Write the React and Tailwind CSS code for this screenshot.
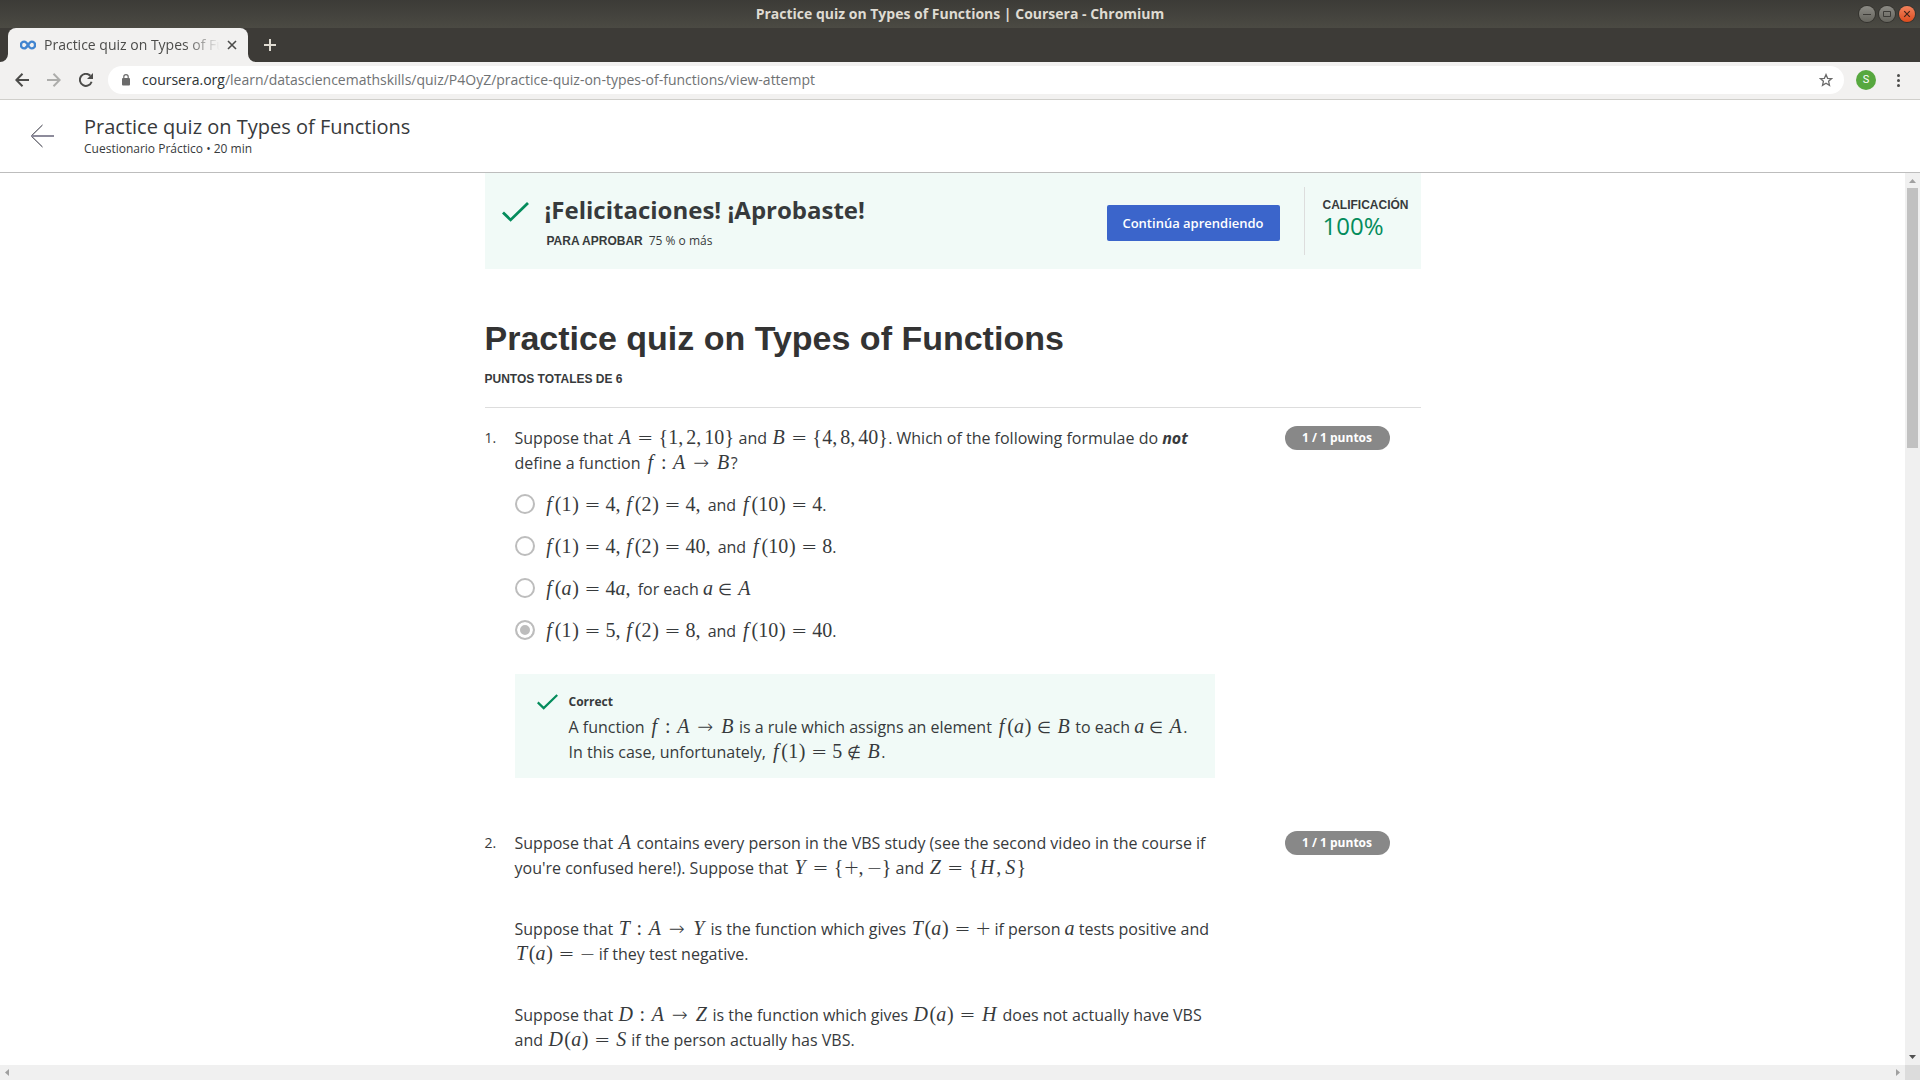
import React from "react";

const UI = "font-['Open_Sans','Noto_Sans',sans-serif]";
const ARIAL = "font-['Liberation_Sans',Arial,sans-serif]";

/* Advance width of each math glyph, relations include their side spacing. */
const GLYPH = {
  A: "w-[15px] italic",
  B: "w-[15px] italic",
  f: "w-[11px] italic",
  a: "w-[10px] italic",
  T: "w-[14px] italic",
  Y: "w-[15px] italic",
  Z: "w-[14px] italic",
  D: "w-[17px] italic",
  H: "w-[18px] italic",
  S: "w-[12px] italic",
  "=": "w-[26px] font-['DejaVu_Sans',sans-serif] text-[19px] font-extralight",
  "→": "w-[29px] font-['DejaVu_Sans',sans-serif] text-[19px] font-extralight",
  "∈": "w-[24px] font-['DejaVu_Sans',sans-serif] text-[16px] font-extralight",
  "∉": "w-[24px] font-['DejaVu_Sans',sans-serif] text-[16px] font-extralight",
  ":": "w-[16px]",
  "+": "w-[15px] font-['DejaVu_Sans',sans-serif] text-[19px] font-extralight",
  "−": "w-[15px] font-['DejaVu_Sans',sans-serif] text-[19px] font-extralight",
  ",": "w-[8px] pr-[3px]",
  "(": "w-[7px]",
  ")": "w-[8px]",
};

function M({ children }) {
  return (
    <span className="whitespace-nowrap font-['Liberation_Serif','DejaVu_Serif',serif] text-[20px] leading-none">
      {[...children].map((c, i) => (
        <span key={i} className={"inline-block text-center " + (GLYPH[c] || "w-[10px]")}>
          {c}
        </span>
      ))}
    </span>
  );
}

function TitleBar() {
  const round = "flex size-4 items-center justify-center rounded-full ring-1 ring-[#34332e]";
  return (
    <header className="grid h-7 shrink-0 grid-cols-[1fr_auto_1fr] items-center bg-linear-to-b from-[#3c3b37] to-[#4b4a43] px-[5px]">
      <span />
      <h1 className="text-[14px] leading-5 font-bold text-[#dfdbd2]">
        Practice quiz on Types of Functions | Coursera - Chromium
      </h1>
      <div className="flex justify-end gap-1">
        <button aria-label="Minimizar" className={round + " bg-linear-to-b from-[#8c8b85] to-[#65645d]"}>
          <svg width="10" height="10" viewBox="0 0 10 10" stroke="#3c3b37"><path d="M1 5.5h8" /></svg>
        </button>
        <button aria-label="Maximizar" className={round + " bg-linear-to-b from-[#8c8b85] to-[#65645d]"}>
          <svg width="10" height="10" viewBox="0 0 10 10" stroke="#3c3b37" fill="none"><path d="M1.5 2.5h7v5h-7z" /></svg>
        </button>
        <button aria-label="Cerrar" className={round + " bg-linear-to-b from-[#f2825b] to-[#dc4a1a]"}>
          <svg width="10" height="10" viewBox="0 0 10 10" stroke="#40241a" strokeWidth="1.2"><path d="M2.2 2.2l5.6 5.6M7.8 2.2l-5.6 5.6" /></svg>
        </button>
      </div>
    </header>
  );
}

function TabStrip() {
  return (
    <div className="flex h-[34px] shrink-0 items-stretch bg-[#3d3b37]">
      <div className="flex w-2 items-end bg-[#3d3b37]">
        <svg width="8" height="8" viewBox="0 0 8 8" fill="#f2f1f0"><path d="M8 0v8H0a8 8 0 0 0 8-8z" /></svg>
      </div>
      <div className="flex w-60 items-center rounded-t-lg bg-[#f2f1f0] pl-3">
        <svg width="16" height="10" viewBox="0 0 16 10" fill="none" stroke="#4285d0" strokeWidth="2.4">
          <path d="M8 5C6.800 2.800 5.800 1.600 4.300 1.600a3.400 3.400 0 0 0 0 6.800C7.500 8.400 8.500 1.600 11.700 1.600a3.400 3.400 0 0 1 0 6.800C10.200 8.400 9.200 7.200 8 5z" />
        </svg>
        <span className="ml-2 w-[176px] overflow-hidden whitespace-nowrap text-[14px] leading-5 text-[#4c4c4a] mask-r-from-80% mask-r-to-100%">
          Practice quiz on Types of Functions
        </span>
        <button aria-label="Cerrar pestaña" className="ml-[7px]">
          <svg width="10" height="10" viewBox="0 0 10 10" stroke="#4c4c4a" strokeWidth="1.6"><path d="M1 1l8 8M9 1L1 9" /></svg>
        </button>
      </div>
      <div className="flex w-2 items-end">
        <svg width="8" height="8" viewBox="0 0 8 8" fill="#f2f1f0"><path d="M0 0v8h8a8 8 0 0 1-8-8z" /></svg>
      </div>
      <button aria-label="Nueva pestaña" className="ml-2">
        <svg width="12" height="12" viewBox="0 0 12 12" stroke="#dfdbd2" strokeWidth="2"><path d="M6 0v12M0 6h12" /></svg>
      </button>
    </div>
  );
}

function Toolbar() {
  return (
    <div className="flex h-[38px] shrink-0 items-center border-b border-[#d0cfcb] bg-[#f2f1f0] pr-5 pb-px pl-[15px]">
      <button aria-label="Atrás">
        <svg width="14" height="14" viewBox="0 0 14 14" fill="none" stroke="#4c4c4a" strokeWidth="2"><path d="M14 7H1.500M7.500 .7L1.300 7l6.200 6.300" /></svg>
      </button>
      <button aria-label="Adelante" className="ml-[18px]">
        <svg width="14" height="14" viewBox="0 0 14 14" fill="none" stroke="#adadab" strokeWidth="2"><path d="M0 7h12.500M6.500 .7L12.700 7l-6.200 6.300" /></svg>
      </button>
      <button aria-label="Recargar" className="ml-[18px]">
        <svg width="14" height="14" viewBox="0 0 14 14"><path d="M12.600 8.700A6 6 0 1 1 11.300 2.800" fill="none" stroke="#4c4c4a" strokeWidth="2" /><path d="M14 0v6H8z" fill="#4c4c4a" /></svg>
      </button>
      <div className="ml-[15px] flex h-7 flex-1 items-center rounded-full bg-white pr-[11px] pl-[14px] text-[14px] leading-5">
        <svg width="8" height="12" viewBox="0 0 8 12"><rect y="4" width="8" height="7.500" rx="1" fill="#6b6b6b" /><path d="M1.800 4.500V2.800a2.200 2.200 0 0 1 4.400 0v1.700" fill="none" stroke="#6b6b6b" strokeWidth="1.200" /></svg>
        <label htmlFor="url" className="ml-3 text-[#2e3436]">coursera.org</label>
        <input
          id="url"
          className="min-w-0 flex-1 bg-transparent text-[#6f7274] outline-none"
          defaultValue="/learn/datasciencemathskills/quiz/P4OyZ/practice-quiz-on-types-of-functions/view-attempt"
        />
        <button aria-label="Marcar página">
          <svg width="14" height="14" viewBox="0 0 14 14" fill="none" stroke="#6b6b6b" strokeWidth="1.300"><path d="M7 1.600l1.600 3.700 4 .3-3 2.700.9 4L7 10.200l-3.500 2.100.9-4-3-2.700 4-.3z" /></svg>
        </button>
      </div>
      <button aria-label="Perfil" className="ml-3 flex size-5 items-center justify-center rounded-full bg-[#57a83f] font-['Roboto',sans-serif] text-[11px] text-white">S</button>
      <button aria-label="Menú" className="ml-[21px]">
        <svg width="3" height="13" viewBox="0 0 3 13" fill="#4c4c4a"><circle cx="1.500" cy="1.500" r="1.500" /><circle cx="1.500" cy="6.500" r="1.500" /><circle cx="1.500" cy="11.500" r="1.500" /></svg>
      </button>
    </div>
  );
}

function CourseHeader() {
  return (
    <div className="flex h-[73px] shrink-0 items-center border-b border-[#bdbdbd] bg-white pl-[30px] text-[#373a3c]">
      <a href="#curso" aria-label="Volver">
        <svg width="24" height="24" viewBox="0 0 24 24" fill="none" stroke="#4b4a58" strokeWidth="1"><path d="M12.500 1L1.300 12l11.200 11" stroke="#2b2b38" /><path d="M1 12h23" stroke="#8d8b9b" strokeWidth="2" /></svg>
      </a>
      <div className="ml-[30px] pt-0.5">
        <div className="text-[20px] leading-6">Practice quiz on Types of Functions</div>
        <div className="text-[12px] leading-5">Cuestionario Práctico • 20 min</div>
      </div>
    </div>
  );
}

function Check({ className }) {
  return (
    <svg className={className} viewBox="0 0 27 20" fill="none" stroke="#048c5c" strokeWidth="2.800"><path d="M1 10.500l7.600 7.400L26 1" /></svg>
  );
}

function Banner() {
  return (
    <section className="flex h-24 items-start bg-[#f1faf7] pr-3">
      <Check className="mt-[29px] ml-[17px] h-5 w-[27px] shrink-0" />
      <div className="ml-4 flex-1 pt-[21px]">
        <h2 className="text-[24px] leading-8 font-bold">¡Felicitaciones! ¡Aprobaste!</h2>
        <p className="mt-1 ml-0.5 text-[12px] leading-[22px]">
          <b className={"mr-1.5 " + ARIAL}>PARA APROBAR</b>75 % o más
        </p>
      </div>
      <button className="mt-8 h-9 w-[173px] rounded-xs bg-[#3b65cb] pt-px text-[13px] font-semibold text-white">Continúa aprendiendo</button>
      <div className="mt-[14px] ml-6 h-[68px] border-l border-[#ddd] pt-2 pl-[18px]">
        <div className={"text-[12px] leading-5 font-bold " + ARIAL}>CALIFICACIÓN</div>
        <div className="text-[24px] leading-[22px] text-[#048c5c]">100%</div>
      </div>
    </section>
  );
}

function Option({ children, checked }) {
  return (
    <label className="flex h-[42px] items-center gap-[9px]">
      <input
        type="radio"
        name="q1"
        defaultChecked={checked}
        className="size-5 shrink-0 appearance-none rounded-full border-2 border-[#bdbdbd] bg-white checked:bg-[#bdbdbd] checked:shadow-[inset_0_0_0_3px_white]"
      />
      <span className="pt-0.5 leading-[25px]">{children}</span>
    </label>
  );
}

function Question({ number, children }) {
  return (
    <section className="flex items-start">
      <div className="w-[30px] shrink-0 text-[14px] leading-6">{number}.</div>
      <div className="min-w-0 max-w-[700px] flex-1 text-[16px] leading-[25px]">{children}</div>
      <div className="ml-[70px] w-[105px] shrink-0 rounded-full bg-[#888] text-center text-[12px] leading-6 font-bold text-white">1 / 1 puntos</div>
    </section>
  );
}

function Page() {
  return (
    <main className="min-w-0 flex-1 overflow-hidden">
      <div className="mx-auto max-w-[936px] text-[#373a3c]">
        <Banner />
        <h1 className={"mt-[45px] text-[34px] leading-[48px] font-bold text-[#333] " + ARIAL}>Practice quiz on Types of Functions</h1>
        <p className={"mt-[7px] mb-[18px] text-[12px] leading-5 font-bold " + ARIAL}>PUNTOS TOTALES DE 6</p>
        <hr className="mb-[18px] border-[#ddd]" />
        <Question number={1}>
          <p>
            Suppose that <M>{"A={1,2,10}"}</M> and <M>{"B={4,8,40}"}</M>. Which of the following formulae do <b><i>not</i></b> define a function <M>f:A→B</M>?
          </p>
          <div className="mt-[7px]">
            <Option><M>f(1)=4,f(2)=4,</M> and <M>f(10)=4</M>.</Option>
            <Option><M>f(1)=4,f(2)=40,</M> and <M>f(10)=8</M>.</Option>
            <Option><M>f(a)=4a,</M> for each <M>a∈A</M></Option>
            <Option checked><M>f(1)=5,f(2)=8,</M> and <M>f(10)=40</M>.</Option>
          </div>
          <div className="mt-[23px] mb-[53px] flex bg-[#f1faf7] pt-[15px] pr-5 pb-[13px] pl-[22px]">
            <Check className="mt-[5px] h-4 w-[21px] shrink-0" />
            <div className="ml-[11px]">
              <div className="text-[12px] leading-[26px] font-bold">Correct</div>
              <p>
                A function <M>f:A→B</M> is a rule which assigns an element <M>f(a)∈B</M> to each <M>a∈A</M>. In this case, unfortunately, <M>f(1)=5∉B</M>.
              </p>
            </div>
          </div>
        </Question>
        <Question number={2}>
          <p>
            Suppose that <M>A</M> contains every person in the VBS study (see the second video in the course if you're confused here!). Suppose that <M>{"Y={+,−}"}</M> and <M>{"Z={H,S}"}</M>
          </p>
          <p className="mt-9">
            Suppose that <M>T:A→Y</M> is the function which gives <M>T(a)=+</M> if person <M>a</M> tests positive and <M>T(a)=−</M> if they test negative.
          </p>
          <p className="mt-9">
            Suppose that <M>D:A→Z</M> is the function which gives <M>D(a)=H</M> does not actually have VBS and <M>D(a)=S</M> if the person actually has VBS.
          </p>
        </Question>
      </div>
    </main>
  );
}

export default function App() {
  return (
    <div className={"flex h-screen flex-col overflow-hidden bg-white " + UI}>
      <TitleBar />
      <TabStrip />
      <Toolbar />
      <CourseHeader />
      <div className="flex min-h-0 flex-1">
        <Page />
        <div className="flex w-[15px] shrink-0 flex-col items-center justify-between bg-[#f0f0f0]">
          <div className="flex h-full flex-col items-center">
            <svg className="mt-1.5" width="7" height="4" viewBox="0 0 7 4" fill="#a0a0a0"><path d="M0 4l3.500-4L7 4z" /></svg>
            <div className="mt-[5px] h-[260px] w-[11px] bg-[#c1c1c1]" />
          </div>
          <svg className="mb-1.5 shrink-0" width="7" height="4" viewBox="0 0 7 4" fill="#505050"><path d="M0 0l3.500 4L7 0z" /></svg>
        </div>
      </div>
      <div className="flex h-[15px] shrink-0 items-center bg-[#f0f0f0]">
        <svg className="ml-[5px]" width="4" height="7" viewBox="0 0 4 7" fill="#a0a0a0"><path d="M4 0L0 3.500 4 7z" /></svg>
        <div className="flex-1" />
        <svg className="mr-[5px]" width="4" height="7" viewBox="0 0 4 7" fill="#a0a0a0"><path d="M0 0l4 3.500L0 7z" /></svg>
        <div className="h-[15px] w-[15px] bg-[#dcdcdc]" />
      </div>
    </div>
  );
}
